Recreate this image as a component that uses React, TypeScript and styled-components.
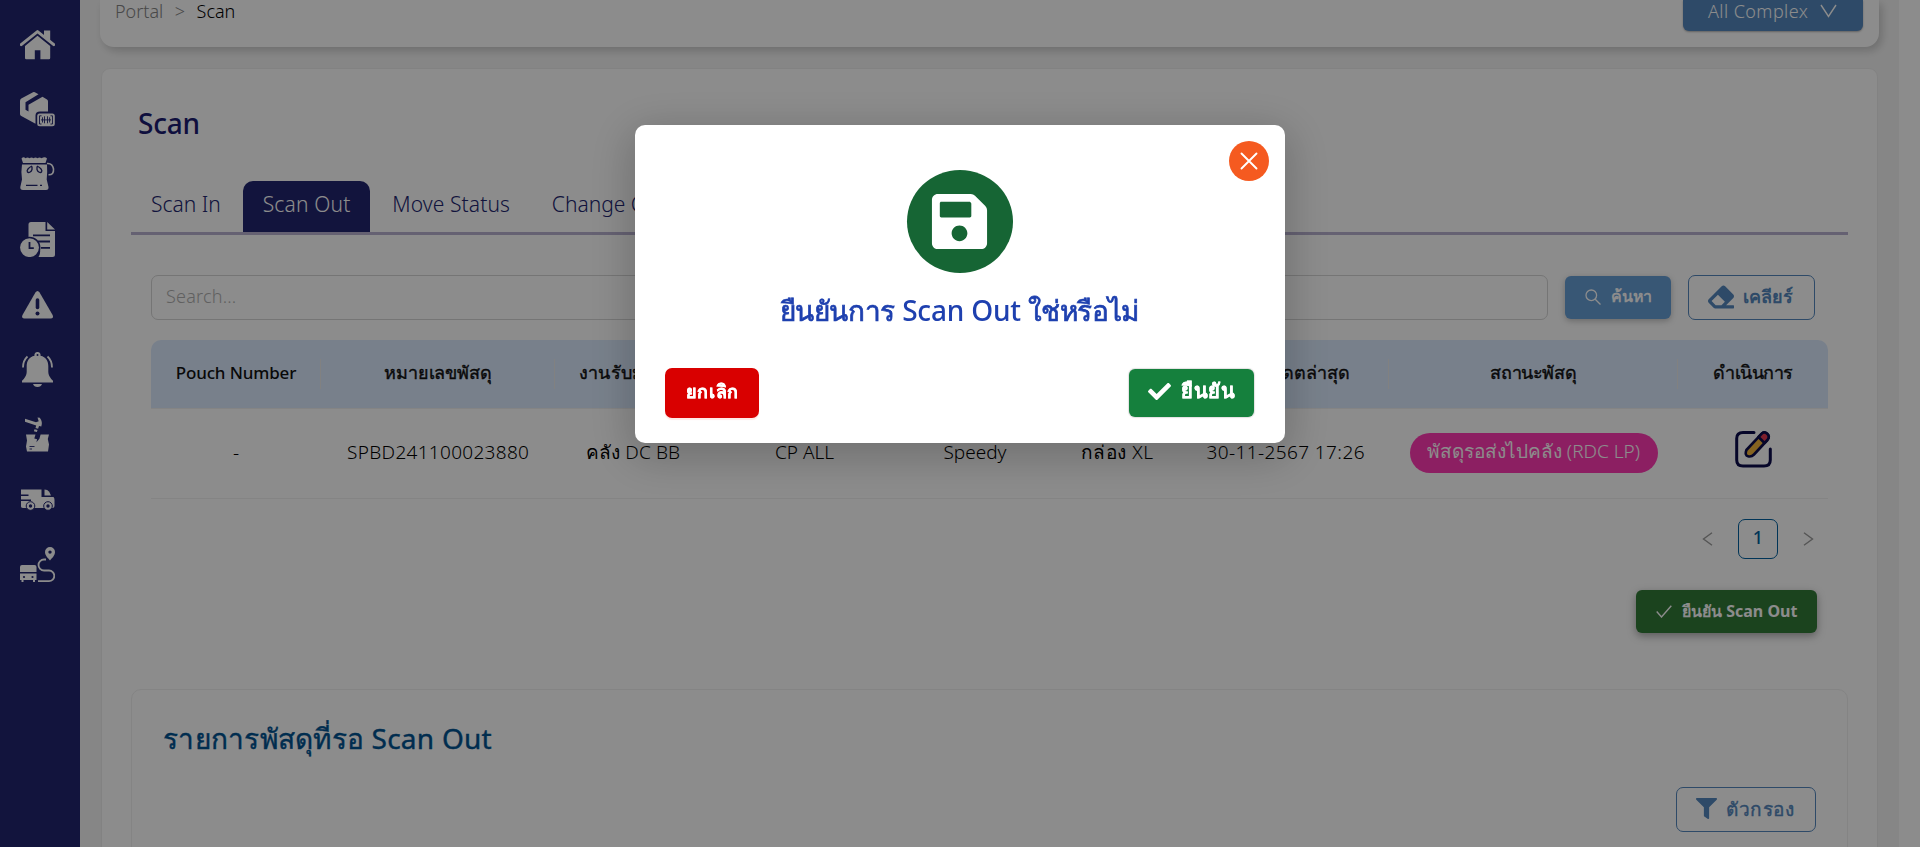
import React from 'react';
import styled, { createGlobalStyle } from 'styled-components';
import { FaSave, FaCheck, FaEraser, FaFilter } from 'react-icons/fa';

const GlobalStyle = createGlobalStyle`
  *, *::before, *::after { box-sizing: border-box; }
  body {
    margin: 0;
    overflow: hidden;
    background: #fff;
    font-family: 'Noto Sans', 'Open Sans', sans-serif;
    font-size: 18px;
    font-weight: 300;
    color: #1b1b1b;
  }
  button { font: inherit; color: inherit; margin: 0; padding: 0; border: 0; background: none; }
`;

const Label = styled.span<{ $ls?: number; $size?: number; $weight?: number; $stroke?: number }>`
  letter-spacing: ${p => p.$ls ?? 0}px;
  margin-right: ${p => -(p.$ls ?? 0)}px;
  font-size: ${p => p.$size ?? 18}px;
  font-weight: ${p => p.$weight ?? 300};
  -webkit-text-stroke: ${p => p.$stroke ?? 0}px currentColor;
  white-space: nowrap;
`;

const Shell = styled.div`
  display: flex;
  height: 847px;
  overflow: hidden;
`;

const Sidebar = styled.nav`
  width: 80px;
  flex: none;
  padding-top: 12px;
  background: #212570;
  color: #fff;
`;

const NavItem = styled.a`
  display: flex;
  align-items: center;
  justify-content: center;
  height: 65px;
  padding-right: 5px;
  svg { display: block; }
`;

const Main = styled.main`
  width: 1819px;
  flex: none;
  padding: 0 20px;
  background: #f5f5f5;
`;

const TopBar = styled.header`
  display: flex;
  justify-content: space-between;
  align-items: flex-start;
  height: 47px;
  padding: 0 16px 0 15px;
  background: #fff;
  border-radius: 0 0 14px 14px;
  box-shadow: 3px 4px 8px rgba(0, 0, 0, 0.18);
`;

const Breadcrumb = styled.div`
  display: flex;
  gap: 11.5px;
  line-height: 22px;
  color: #000;
`;

const Muted = styled.span`
  color: #858585;
`;

const ComplexButton = styled.button`
  display: flex;
  gap: 12px;
  width: 180px;
  height: 31px;
  padding-left: 25px;
  line-height: 22px;
  color: #fff;
  background: #5487bd;
  border-radius: 0 0 6px 6px;
  box-shadow: 0 1px 2px rgba(0, 0, 0, 0.3);
  svg { margin-top: 4px; }
`;

const Card = styled.section`
  height: 900px;
  margin: 21px 1px 0;
  padding: 0 29px;
  background: #fff;
  border: 1px solid #ededed;
  border-radius: 9px;
`;

const Title = styled.h1`
  margin: 32px 0 0 7px;
  font-weight: 500;
  font-size: 28px;
  line-height: 44px;
  color: #1c1c72;
`;

const Tabs = styled.div`
  display: flex;
  height: 54px;
  margin-top: 36px;
  padding-left: 20px;
  gap: 2px;
  border-bottom: 3px solid #b8b1d0;
`;

const Tab = styled.button<{ $active?: boolean }>`
  padding: 0 20px 5px;
  line-height: 46px;
  font-weight: 300;
  color: ${p => (p.$active ? '#fff' : '#212570')};
  background: ${p => (p.$active ? '#212570' : 'transparent')};
  border-radius: 10px 10px 0 0;
  &:first-child { padding-left: 0; }
`;

const Body = styled.div`
  padding: 0 20px;
`;

const SearchRow = styled.div`
  display: flex;
  align-items: stretch;
  gap: 17px;
  height: 45px;
  margin: 40px 0 20px;
  padding-right: 13px;
`;

const SearchField = styled.div`
  flex: 1;
  padding-left: 14px;
  line-height: 41px;
  color: #b0b0b0;
  border: 1px solid #d6d6d6;
  border-radius: 7px;
`;

const SearchButton = styled.button`
  display: flex;
  align-items: center;
  gap: 10px;
  width: 106px;
  margin: 1px 0;
  padding: 0 0 2px 20px;
  color: #fff;
  background: #669ed6;
  border-radius: 6px;
  box-shadow: 0 2px 6px rgba(0, 0, 0, 0.25);
`;

const OutlineButton = styled.button<{ $w: number }>`
  display: flex;
  align-items: center;
  gap: 9px;
  width: ${p => p.$w}px;
  height: 45px;
  padding: 0 0 2px 19px;
  color: #5487bd;
  border: 1px solid #5487bd;
  border-radius: 7px;
`;

const TableHead = styled.div`
  display: grid;
  grid-template-columns: 170px 234px 156px 187px 154px 130px 207px 289px 150px;
  height: 69px;
  background: #dbeafe;
  border-bottom: 1px solid #f0f0f0;
  border-radius: 10px 10px 0 0;
  color: #111;
`;

const HeadCell = styled.div`
  display: flex;
  align-items: center;
  justify-content: center;
  padding-bottom: 4px;
  background: linear-gradient(#ececec, #ececec) right 19px / 1px 30px no-repeat;
  &:last-child { background: none; }
`;

const TableRow = styled(TableHead)`
  height: 90px;
  background: transparent;
  border-radius: 0;
  color: #000;
`;

const Cell = styled.div<{ $lift?: number }>`
  display: flex;
  align-items: center;
  justify-content: center;
  padding-bottom: ${p => p.$lift ?? 3}px;
`;

const Pill = styled.span`
  height: 40px;
  width: 248px;
  text-align: center;
  line-height: 37px;
  color: #fff;
  background: #ff3ab3;
  border-radius: 20px;
`;

const Pagination = styled.div`
  display: flex;
  justify-content: flex-end;
  align-items: center;
  gap: 25px;
  height: 40px;
  margin: 20px 14px 0 0;
  color: #9b9b9b;
`;

const PageNumber = styled.span`
  width: 40px;
  height: 40px;
  line-height: 34px;
  text-align: center;
  color: #005f9e;
  border: 1px solid #005f9e;
  border-radius: 7px;
`;

const Actions = styled.div`
  display: flex;
  justify-content: flex-end;
  margin: 31px 11px 0 0;
`;

const ConfirmScan = styled.button`
  display: flex;
  align-items: center;
  gap: 10px;
  width: 181px;
  height: 43px;
  padding: 0 0 1px 20px;
  color: #fff;
  background: #327a37;
  border-radius: 6px;
  box-shadow: 0 3px 8px rgba(0, 0, 0, 0.35);
`;

const WaitingPanel = styled.section`
  height: 300px;
  margin-top: 56px;
  padding: 31px 31px 0 31px;
  border: 1px solid #f0f0f0;
  border-radius: 10px;
`;

const PanelTitle = styled.h2`
  margin: 0;
  font-size: 28px;
  font-weight: 400;
  line-height: 34px;
  color: #005291;
`;

const PanelTools = styled.div`
  display: flex;
  justify-content: flex-end;
  margin-top: 32px;
`;

const Overlay = styled.div`
  position: fixed;
  inset: 0;
  display: flex;
  justify-content: center;
  align-items: flex-start;
  padding-top: 125px;
  background: rgba(0, 0, 0, 0.45);
`;

const Dialog = styled.div`
  position: relative;
  width: 650px;
  height: 318px;
  padding: 45px 31px 0 30px;
  text-align: center;
  background: #fff;
  border-radius: 10px;
  box-shadow: 0 10px 44px 6px rgba(0, 0, 0, 0.2);
`;

const CloseButton = styled.button`
  position: absolute;
  top: 16px;
  right: 16px;
  display: flex;
  align-items: center;
  justify-content: center;
  width: 40px;
  height: 40px;
  background: #f55a20;
  border-radius: 50%;
`;

const SaveBadge = styled.div`
  display: flex;
  align-items: center;
  justify-content: center;
  width: 106px;
  height: 103px;
  margin: 0 auto;
  color: #fff;
  background: #166534;
  border-radius: 50%;
`;

const Question = styled.p`
  margin: 18px 0 0;
  font-size: 28px;
  font-weight: 500;
  line-height: 38px;
  color: #1e40af;
`;

const DialogFooter = styled.div`
  display: flex;
  justify-content: space-between;
  align-items: center;
  margin-top: 39px;
`;

const CancelButton = styled.button`
  width: 94px;
  height: 50px;
  padding-bottom: 3px;
  color: #fff;
  background: #d90000;
  border-radius: 7px;
  box-shadow: 0 2px 1px rgba(255, 38, 5, 0.1);
`;

const AcceptButton = styled.button`
  display: flex;
  align-items: center;
  gap: 10px;
  width: 125px;
  height: 48px;
  padding: 0 0 4px 19px;
  color: #fff;
  background: #15803d;
  border-radius: 6px;
  box-shadow: 0 0 1px 1px rgba(0, 0, 0, 0.12);
`;

const Icon = ({ children }: { children: React.ReactNode }) => (
  <svg width="35" height="35" viewBox="0 0 35 35" fill="currentColor">{children}</svg>
);
const NAVY = '#212570';

const navIcons = [
  <Icon key="home">
    <path d="M24 3.5h6.2v11l-6.2-5z" />
    <path d="M1.2 17.6 17.5 4.6l16.3 13" fill="none" stroke="currentColor" strokeWidth="3" strokeLinecap="round" strokeLinejoin="round" />
    <path d="M5 19 17.5 8.8 30.2 19v12q0 1.2-1.2 1.2h-8.6v-9h-5.6v9H6.2Q5 32.200 5 31z" />
  </Icon>,
  <Icon key="box">
    <path d="M0 9Q0 7.400 1.300 6.600L13 .2q1.200-.5 2.300.2L18.500 2.200 5.500 10.200v7.600l3 1.800v-6.800L22.500 4.700l4.500 2.700q1 .6 1 2V19.500H20q-4.500 0-4.500 4v8.200L1.300 24Q0 23.300 0 22z" />
    <rect x="17.200" y="21.500" width="17.600" height="12.800" rx="2.500" />
    <path d="M21.500 23.800h-2v8.200h2M30.500 23.800h2v8.200h-2M22.500 25.300v5.200M24.500 24.300v7M27.500 24.300v7M29.600 25.300v5.200M21 27.900h10" fill="none" stroke={NAVY} strokeWidth=".9" />
  </Icon>,
  <Icon key="pouch">
    <path d="M1.500 1.500Q3.500-.8 5.500 1.300q2-1.800 4 0 2-1.800 4 0 2-1.800 4 0 2-1.800 4 0Q25-.8 27 1.500L25.500 6H3z" />
    <path d="M2 7.500h25q.5 7-.3 15l1.800 7.500Q28.800 33 26 33H3Q0 33 .3 30l1.700-7.500Q.8 15 2 7.500z" />
    <path d="M27 6.500q5.500-.5 6.500 5.500.5 6-5 5.800" fill="none" stroke="currentColor" strokeWidth="1.600" />
    <path d="M12 9.500v3c-.8 2.800-3.600 3.800-4.600 2.300S8.400 10.800 12 9M17 9.500v3c.8 2.800 3.600 3.800 4.600 2.300S20.600 10.800 17 9M6 28.300h11.500M20 28.300h2" fill="none" stroke={NAVY} strokeWidth="1.300" />
  </Icon>,
  <Icon key="report">
    <path d="M8.500 2.500Q8.500 0 11 0h14.500v9H35v23.500Q35 35 32.500 35h-14a11 11 0 0 0 1.300-8.500Q17 16.500 8.500 16z" />
    <path d="M27.200 0 35 7.500h-7.800z" />
    <path d="M13 13.300h17M18 19.500h12M21 25.800h9" stroke={NAVY} strokeWidth="1.800" />
    <circle cx="9.500" cy="25.600" r="10.200" stroke={NAVY} strokeWidth="1.500" />
    <path d="M9.500 20v6.200h4.300" fill="none" stroke={NAVY} strokeWidth="1.800" />
  </Icon>,
  <Icon key="warning">
    <path d="M15.400 5.400q2.100-3 4.200 0l13 22.600q1.500 3.300-2 3.500H4.500q-3.500-.2-2-3.500z" />
    <path d="M17.500 13v7.500" stroke={NAVY} strokeWidth="3.600" strokeLinecap="round" />
    <circle cx="17.500" cy="26.500" r="2" fill={NAVY} />
  </Icon>,
  <Icon key="bell">
    <path d="M17.500 0a3 3 0 0 1 3 3.700C26 5 28.300 9 28.300 14v6q0 4.500 4.700 8.700V30.500H2v-1.800Q6.700 24.500 6.700 20v-6C6.700 9 9 5 14.500 3.700a3 3 0 0 1 3-3.700zM13 32h9q-1 3-4.500 3T13 32z" />
    <circle cx="17.500" cy="3" r="1" fill={NAVY} />
    <path d="M3 15.500Q3 8.500 7.500 4.500M32 15.500Q32 8.500 27.500 4.500" fill="none" stroke="currentColor" strokeWidth="1.800" />
  </Icon>,
  <Icon key="hammer">
    <path d="M5 1.800 16 5.200 18.700 4.200 17.500.5l2.300.3Q23 5 21.300 9.500l-2.300-.6-.9 2.800-2.600-.8.7-2.500L5 4.800zM14.500 12.300l3 .8-.6 1.900-3-.7z" />
    <path d="M6 17.500h9.500l-1.200 4 2.800.7-.7 3 3-3.500 1.200-4.200H29l-1.200 4.500 1.200 5.500-1 7H7l-1-5 1-6z" />
    <path d="M9.500 29.500h5M9.500 32h2.500" stroke={NAVY} strokeWidth=".9" />
  </Icon>,
  <Icon key="truck">
    <path d="M3.500 7.500h18V15h12q1 1 1 3v6q0 2-2 2H3.500Q1 26 1 24.500V7.500z" />
    <path d="M24.500 7.500q3 0 4.700 2.300l1.800 3.700h-6.500z" />
    <path d="M0 13.200h8.500M0 18.200h11" stroke={NAVY} strokeWidth="1.400" />
    <g stroke={NAVY} strokeWidth="1"><circle cx="10.500" cy="24" r="4.300" /><circle cx="28" cy="24" r="4.300" /></g>
    <circle cx="10.500" cy="24" r="1.700" fill={NAVY} /><circle cx="28" cy="24" r="1.700" fill={NAVY} />
  </Icon>,
  <Icon key="route">
    <path d="M2 18h12.500q2 0 2 2v5H0v-5q0-2 2-2zM0 26.500h16.500V33H15v2h-2v-2H3.500v2h-2v-2H0z" />
    <circle cx="4" cy="30" r="1.100" fill={NAVY} /><circle cx="12.500" cy="30" r="1.100" fill={NAVY} />
    <path fillRule="evenodd" d="M30 0a5 5 0 0 1 5 5c0 3.500-3 6-5 8.500-2-2.500-5-5-5-8.500a5 5 0 0 1 5-5zm0 3.400a1.700 1.700 0 1 0 0 3.400 1.700 1.700 0 0 0 0-3.400z" />
    <path d="M26 12.500h-2a5.500 5.500 0 0 0 0 11h5a5.300 5.300 0 0 1 0 10.600H18" fill="none" stroke="currentColor" strokeWidth="1.800" />
  </Icon>,
];

const Chevron = ({ d, w, h }: { d: string; w: number; h: number }) => (
  <svg width={w} height={h} viewBox={`0 0 ${w} ${h}`} fill="none" stroke="currentColor" strokeWidth="1.400">
    <path d={d} />
  </svg>
);

const EditIcon = () => (
  <svg width="37" height="38" viewBox="0 0 37 38" fill="none" stroke="#0c0c4c" strokeLinecap="round" strokeLinejoin="round">
    <path d="M19 2.500H8Q1.700 2.500 1.700 8.500V30Q1.700 36 8 36h21q6.300 0 6.300-6V19" strokeWidth="3" />
    <path d="M26.500 3.800q2.700-2.800 5.700 0t.2 6.200L19 24.500q-2.500 2.700-6 1.800t-1.600-6.300z" fill="#f2b53c" strokeWidth="2.600" />
    <path d="m26.500 3.800q2.700-2.800 5.700 0t.2 6.200L29.500 13 23.500 7z" fill="#e63950" strokeWidth="2.600" />
  </svg>
);

const headings: [string, number, number, number][] = [
  ['Pouch Number', 17, -0.15, 0],
  ['หมายเลขพัสดุ', 18, -0.15, 0.4],
  ['งานรับมาจาก', 18, 0.2, 0.4],
  ['บริษัท', 18, 0, 0.4],
  ['ขนส่ง', 18, 0, 0.4],
  ['ขนาด', 18, 0, 0.4],
  ['วันที่อัปเดตล่าสุด', 18, -0.1, 0.4],
  ['สถานะพัสดุ', 18, -0.35, 0.4],
  ['ดำเนินการ', 18, -0.5, 0.4],
];

const values: [string, number][] = [
  ['-', 0],
  ['SPBD241100023880', 0.3],
  ['คลัง DC BB', 0.1],
  ['CP ALL', 0],
  ['Speedy', 0],
  ['กล่อง XL', 0.5],
  ['30-11-2567 17:26', 0.4],
];

export default function App() {
  return (
    <>
      <GlobalStyle />
      <Shell>
        <Sidebar>
          {navIcons.map((icon, i) => <NavItem key={i}>{icon}</NavItem>)}
        </Sidebar>
        <Main>
          <TopBar>
            <Breadcrumb>
              <Muted>Portal</Muted>
              <Muted>&gt;</Muted>
              <span>Scan</span>
            </Breadcrumb>
            <ComplexButton>
              <Label $ls={0.42}>All Complex</Label>
              <Chevron w={17} h={14} d="M1 1l7.500 11.500L16 1" />
            </ComplexButton>
          </TopBar>
          <Card>
            <Title><Label $size={28} $weight={500} $ls={-0.2}>Scan</Label></Title>
            <Tabs>
              <Tab><Label $size={21}>Scan In</Label></Tab>
              <Tab $active><Label $size={21} $ls={0.15}>Scan Out</Label></Tab>
              <Tab><Label $size={21} $ls={0.1}>Move Status</Label></Tab>
              <Tab><Label $size={21}>Change Courier</Label></Tab>
            </Tabs>
            <Body>
              <SearchRow>
                <SearchField><Label $ls={0.2}>Search...</Label></SearchField>
                <SearchButton>
                  <svg width="16" height="16" viewBox="0 0 16 16" fill="none" stroke="currentColor" strokeWidth="1.300">
                    <circle cx="6.300" cy="6.300" r="5.300" /><path d="m10.200 10.200 5.300 5.300" />
                  </svg>
                  <Label $size={16} $weight={700} $ls={-0.2}>ค้นหา</Label>
                </SearchButton>
                <OutlineButton $w={127}>
                  <FaEraser size={26} />
                  <Label $weight={600} $ls={0.1}>เคลียร์</Label>
                </OutlineButton>
              </SearchRow>
              <TableHead>
                {headings.map(([text, size, ls, stroke]) => (
                  <HeadCell key={text}><Label $size={size} $weight={500} $ls={ls} $stroke={stroke}>{text}</Label></HeadCell>
                ))}
              </TableHead>
              <TableRow>
                {values.map(([text, ls]) => (
                  <Cell key={text}><Label $size={19} $ls={ls}>{text}</Label></Cell>
                ))}
                <Cell $lift={1}><Pill><Label $size={19}>พัสดุรอส่งไปคลัง (RDC LP)</Label></Pill></Cell>
                <Cell $lift={9}><EditIcon /></Cell>
              </TableRow>
              <Pagination>
                <Chevron w={11} h={14} d="M10 .7 1.500 7l8.500 6.300" />
                <PageNumber><Label $weight={500}>1</Label></PageNumber>
                <Chevron w={11} h={14} d="M1 .7 9.500 7 1 13.300" />
              </Pagination>
              <Actions>
                <ConfirmScan>
                  <Chevron w={16} h={13} d="M.7 6.500 5.500 12 15.300.7" />
                  <Label $size={16} $weight={700}>ยืนยัน Scan Out</Label>
                </ConfirmScan>
              </Actions>
            </Body>
            <WaitingPanel>
              <PanelTitle><Label $size={28} $weight={400} $ls={0.25} $stroke={0.4}>รายการพัสดุที่รอ Scan Out</Label></PanelTitle>
              <PanelTools>
                <OutlineButton $w={140}>
                  <FaFilter size={21} />
                  <Label $size={19} $weight={500} $ls={0.5} $stroke={0.4}>ตัวกรอง</Label>
                </OutlineButton>
              </PanelTools>
            </WaitingPanel>
          </Card>
        </Main>
      </Shell>
      <Overlay>
        <Dialog>
          <CloseButton aria-label="close">
            <svg width="18" height="18" viewBox="0 0 18 18" stroke="#fff" strokeWidth="1.900" strokeLinecap="round">
              <path d="m1.500 1.500 15 15M16.500 1.500l-15 15" />
            </svg>
          </CloseButton>
          <SaveBadge><FaSave size={63} /></SaveBadge>
          <Question>
            <Label $size={28} $weight={500} $ls={-0.4} $stroke={0.7}>ยืนยันการ</Label>
            <Label $size={28} $weight={500} $ls={-0.2}> Scan Out </Label>
            <Label $size={28} $weight={500} $ls={-0.6} $stroke={0.7}>ใช่หรือไม่</Label>
          </Question>
          <DialogFooter>
            <CancelButton><Label $weight={700} $ls={0.6} $stroke={0.3}>ยกเลิก</Label></CancelButton>
            <AcceptButton>
              <FaCheck size={23} />
              <Label $size={20} $weight={700} $ls={0.5} $stroke={0.3}>ยืนยัน</Label>
            </AcceptButton>
          </DialogFooter>
        </Dialog>
      </Overlay>
    </>
  );
}
